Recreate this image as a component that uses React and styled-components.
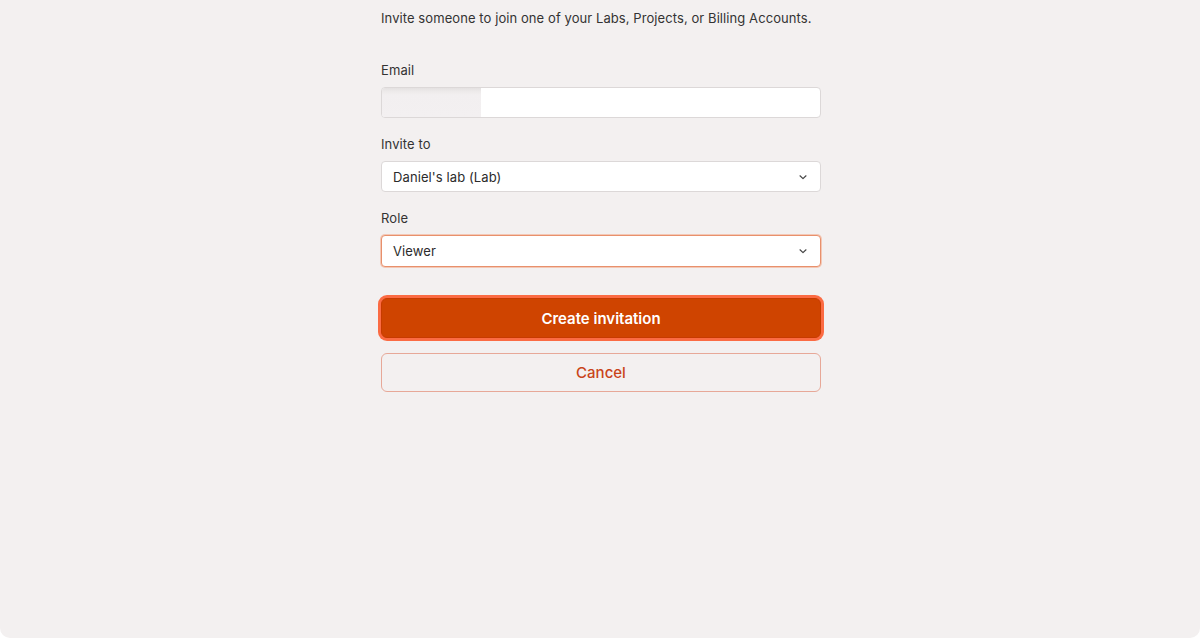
import styled, { createGlobalStyle } from 'styled-components';

const GlobalStyle = createGlobalStyle`
    html, body {
        margin: 0;
        padding: 0;
        background: #ffffff;
    }
    * {
        box-sizing: border-box;
    }
`;

const Page = styled.div`
    width: 1200px;
    height: 638px;
    background: #f3f0f0;
    border-radius: 0 0 10px 10px;
    font-family: Inter, "Noto Sans", sans-serif;
    color: #2b2b2b;
    display: flex;
    justify-content: center;
`;

const Form = styled.div`
    width: 440px;
    margin-left: 2px;
    padding-top: 9px;
    display: flex;
    flex-direction: column;
`;

const Intro = styled.p`
    margin: 0 0 34px;
    font-size: 13px;
    line-height: 18px;
    letter-spacing: 0.08px;
    color: #333;
`;

const Field = styled.div`
    display: flex;
    flex-direction: column;
    margin-bottom: 17px;
`;

const Label = styled.label`
    font-size: 13px;
    line-height: 18px;
    letter-spacing: 0.1px;
    color: #333;
    margin-bottom: 8px;
`;

const Input = styled.div`
    position: relative;
    height: 31px;
    background: #ffffff;
    border: 1px solid #dcd8d8;
    border-radius: 4px;
    overflow: hidden;
`;

const Redacted = styled.div`
    position: absolute;
    left: -2px;
    top: 0;
    width: 101px;
    height: 100%;
    background: linear-gradient(180deg, #e4e1e1 0px, #ece9e9 3px, #f2eff0 7px, #f3f0f1 100%);
`;

const Select = styled.div`
    height: ${(p) => (p.$focused ? '32px' : '31px')};
    background: #ffffff;
    border: 1px solid ${(p) => (p.$focused ? '#e8906c' : '#dcd8d8')};
    box-shadow: ${(p) => (p.$focused ? '0 0 0 1px #f3c8b6' : 'none')};
    border-radius: 4px;
    display: flex;
    align-items: center;
    justify-content: space-between;
    padding: 0 12px 0 11px;
    font-size: 13px;
    letter-spacing: 0.1px;
    color: #2b2b2b;
`;

const Chevron = () => (
    <svg width="10" height="10" viewBox="0 0 10 10" fill="none">
        <path d="M2 3.8 L5 6.6 L8 3.8" stroke="#444" strokeWidth="1.2" strokeLinecap="round" strokeLinejoin="round" />
    </svg>
);

const PrimaryButton = styled.button`
    margin-top: 14px;
    height: 40px;
    border: 1px solid #c73a00;
    border-radius: 6px;
    background: #cf4400;
    box-shadow: 0 0 0 3px #fb6b43;
    color: #ffffff;
    font-family: inherit;
    font-size: 15px;
    font-weight: 600;
    cursor: pointer;
`;

const SecondaryButton = styled.button`
    margin-top: 15px;
    height: 39px;
    border: 1px solid #e7a898;
    border-radius: 6px;
    background: transparent;
    color: #c9441a;
    font-family: inherit;
    font-size: 15px;
    font-weight: 500;
    cursor: pointer;
`;

export default function App() {
    return (
        <>
            <GlobalStyle />
            <Page>
                <Form>
                    <Intro>Invite someone to join one of your Labs, Projects, or Billing Accounts.</Intro>
                    <Field>
                        <Label>Email</Label>
                        <Input>
                            <Redacted />
                        </Input>
                    </Field>
                    <Field>
                        <Label>Invite to</Label>
                        <Select>
                            <span>Daniel's lab (Lab)</span>
                            <Chevron />
                        </Select>
                    </Field>
                    <Field>
                        <Label>Role</Label>
                        <Select $focused>
                            <span>Viewer</span>
                            <Chevron />
                        </Select>
                    </Field>
                    <PrimaryButton>Create invitation</PrimaryButton>
                    <SecondaryButton>Cancel</SecondaryButton>
                </Form>
            </Page>
        </>
    );
}
